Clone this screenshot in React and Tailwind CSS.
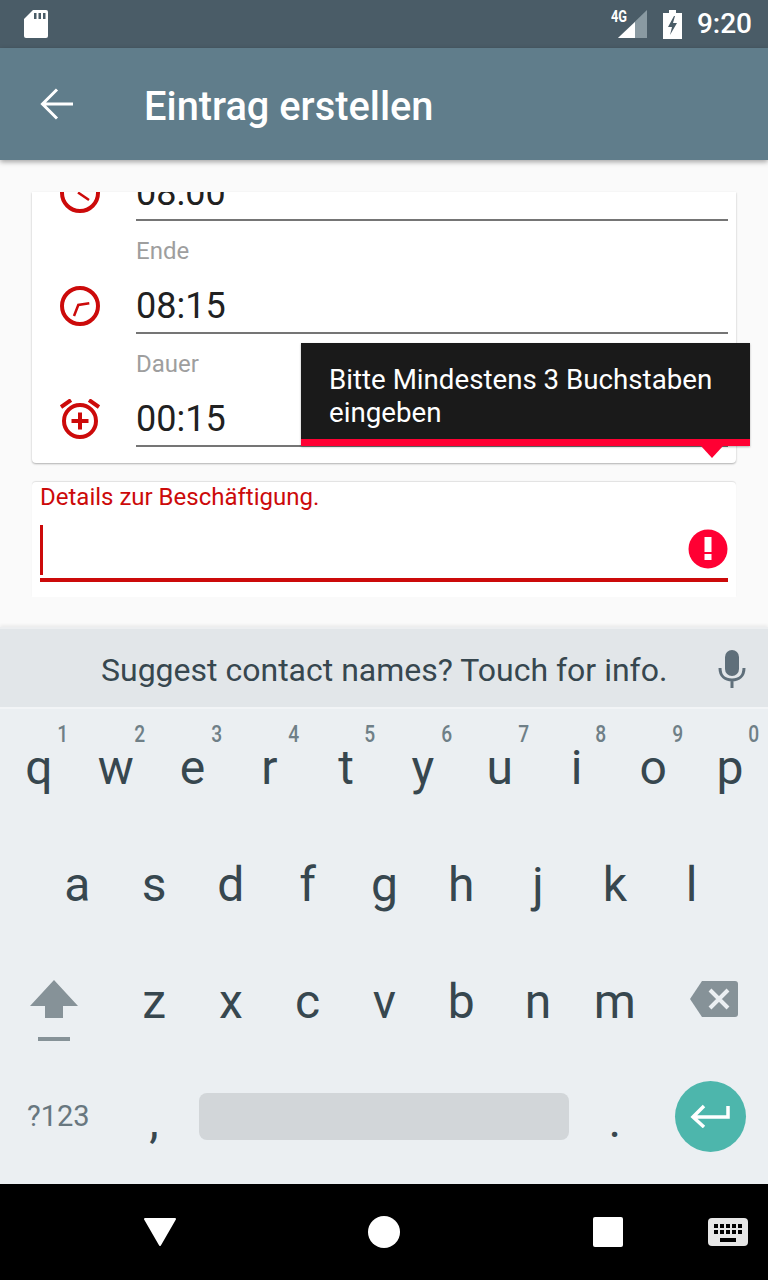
const ROW1 = [['q', '1'], ['w', '2'], ['e', '3'], ['r', '4'], ['t', '5'], ['y', '6'], ['u', '7'], ['i', '8'], ['o', '9'], ['p', '0']]
const ROW2 = ['a', 's', 'd', 'f', 'g', 'h', 'j', 'k', 'l']
const ROW3 = ['z', 'x', 'c', 'v', 'b', 'n', 'm']

function StatusBar() {
  return (
    <div className="h-12 shrink-0 bg-[#4a5c67] flex items-center pl-6 pr-4 text-white">
      <svg width="24" height="28" viewBox="0 0 24 28">
        <path fill="#fff" d="M9 0h13a2 2 0 0 1 2 2v24a2 2 0 0 1-2 2H2a2 2 0 0 1-2-2V9z" />
        <path fill="#4a5c67" d="M10 3h2.500v6H10zM14.500 3H17v6h-2.500zM19 3h2.500v6H19z" />
      </svg>
      <div className="flex-1" />
      <div className="relative w-[36px] h-[28px] mr-[16px]">
        <svg width="29" height="28" viewBox="0 0 29 28" className="absolute left-[7px] top-0">
          <path fill="#8a9aa2" d="M29 0v28H0z" />
          <path fill="#fff" d="M17 12v16H0z" />
        </svg>
        <span className="absolute left-0 top-[-1px] text-[16px] leading-[16px] font-bold scale-x-[0.8] origin-left">4G</span>
      </div>
      <svg width="19" height="29" viewBox="0 0 19 29" className="mr-[15px]">
        <path fill="#fff" d="M6 0h7v3h6v26H0V3h6z" />
        <path fill="#4a5c67" d="M11 6 5 17h4l-2 8 7-12h-4l2-7z" />
      </svg>
      <span className="text-[28px] leading-none font-medium">9:20</span>
    </div>
  )
}

function Toolbar() {
  return (
    <div className="relative z-10 h-[112px] shrink-0 bg-[#607d8b] flex items-center shadow-[0_2px_5px_rgba(0,0,0,0.35)] text-white">
      <div className="w-[144px] pl-[40px]">
        <svg width="33" height="32" viewBox="0 0 33 32" fill="none" stroke="#fff" strokeWidth="3">
          <path d="M33 16H3M17 1.500 2.500 16 17 30.500" />
        </svg>
      </div>
      <h1 className="mt-[6px] text-[39.8px] font-medium leading-none">Eintrag erstellen</h1>
    </div>
  )
}

function ClockIcon({ hand }) {
  return (
    <svg width="40" height="40" viewBox="0 0 40 40" fill="none" stroke="#cc0a0a" strokeWidth="4">
      <circle cx="20" cy="20" r="18" />
      <path d={hand} strokeWidth="2.500" />
    </svg>
  )
}

function AlarmIcon() {
  return (
    <svg width="40" height="40" viewBox="0 0 40 40" fill="none" stroke="#cc0a0a" strokeWidth="4">
      <circle cx="20" cy="22" r="16" />
      <path d="M1 8 11 1M39 8 29 1" />
      <path d="M20 13.500v17M11.500 22h17" />
    </svg>
  )
}

function TimeRow({ label, value, icon }) {
  return (
    <div className="h-[113px] flex pl-[28px] pr-2">
      <div className="w-[76px] shrink-0 flex items-end pb-[8px]">{icon}</div>
      <div className="flex-1 flex flex-col">
        {label && <span className="mt-[14px] text-[24px] leading-[32px] text-[#9e9e9e]">{label}</span>}
        <span className="mt-auto pb-[4px] text-[36px] leading-[44px] text-[#212121] border-b-2 border-[#757575]">{value}</span>
      </div>
    </div>
  )
}

function Form() {
  return (
    <div className="h-[467px] shrink-0 bg-[#fafafa] px-8 pt-8 overflow-hidden">
      <div className="h-[271px] overflow-hidden bg-white rounded-b-[4px] shadow-[0_1px_2px_rgba(0,0,0,0.3)]">
        <div className="-mt-[84px]">
          <TimeRow value="08:00" icon={<ClockIcon hand="M18 19.500 29 27" />} />
          <TimeRow label="Ende" value="08:15" icon={<ClockIcon hand="M14 30l4.300-11 11-1.700" />} />
          <TimeRow label="Dauer" value="00:15" icon={<AlarmIcon />} />
        </div>
      </div>
      <div className="mt-[19px] h-[115px] bg-white rounded-t-[4px] shadow-[0_-1px_1px_rgba(0,0,0,0.1)] px-2 pt-[1px]">
        <p className="text-[24px] leading-[28px] text-[#cc0a0a]">Details zur Beschäftigung.</p>
        <div className="mt-[14px] h-[57px] border-b-4 border-[#cc0a0a] flex items-start justify-between">
          <div className="w-[3px] h-[50px] bg-[#cc0a0a]" />
          <svg width="40" height="40" viewBox="0 0 40 40" className="mt-[4px]">
            <circle cx="20" cy="20" r="19.500" fill="#ff0033" />
            <path fill="#fff" d="M16.500 8h7v15h-7zM16.500 25h7v6h-7z" />
          </svg>
        </div>
      </div>
    </div>
  )
}

function Letter({ ch, hint }) {
  return (
    <div className="relative w-[76.8px] h-full shrink-0 flex items-center justify-center pl-[1px] text-[48px] leading-none text-[#37474f]">
      <span>{ch}</span>
      {hint && <span className="absolute right-[7px] top-[13px] text-[24px] leading-[24px] font-medium text-[#6f7f87] scale-x-[0.8]">{hint}</span>}
    </div>
  )
}

function Keyboard() {
  return (
    <div className="flex-1 flex flex-col bg-[#ebeff2] border-t-2 border-[#eceef0] shadow-[0_-2px_3px_rgba(0,0,0,0.06)]">
      <div className="h-[78px] shrink-0 bg-[#e2e6e9] flex items-center relative">
        <span className="pl-[101px] mt-[4px] text-[32px] leading-none text-[#37474f]">Suggest contact names? Touch for info.</span>
        <svg width="28" height="38" viewBox="0 0 28 38" className="absolute left-[718px] top-[21px]">
          <rect x="7" y="0" width="14" height="26" rx="7" fill="#5f6f7a" />
          <path d="M2 18c0 8 5 12 12 12s12-4 12-12M14 30v8" fill="none" stroke="#5f6f7a" strokeWidth="3" />
        </svg>
      </div>
      <div className="h-[2px] shrink-0 bg-[#f2f4f6]" />
      <div className="h-[117px] flex">
        {ROW1.map(([ch, hint]) => <Letter key={ch} ch={ch} hint={hint} />)}
      </div>
      <div className="h-[117px] flex pl-[38.4px]">
        {ROW2.map(ch => <Letter key={ch} ch={ch} />)}
      </div>
      <div className="h-[118px] flex">
        <div className="w-[115.2px] shrink-0 flex items-center pl-[30px]">
          <svg width="48" height="62" viewBox="0 0 48 62" className="mt-[18px]">
            <path fill="#869298" d="M24 0 48 26H33v12H15V26H0z" />
            <rect x="8" y="57" width="32" height="4" fill="#869298" />
          </svg>
        </div>
        {ROW3.map(ch => <Letter key={ch} ch={ch} />)}
        <div className="flex-1 flex items-center pl-[37px]">
          <svg width="48" height="36" viewBox="0 0 48 36" className="-mt-[6px]">
            <path fill="#869298" d="M12 0h33a3 3 0 0 1 3 3v30a3 3 0 0 1-3 3H12L0 18z" />
            <path stroke="#ebeff2" strokeWidth="4" d="M20 9l18 18M38 9 20 27" />
          </svg>
        </div>
      </div>
      <div className="h-[123px] flex items-start">
        <div className="w-[115.2px] h-[110px] shrink-0 flex items-center pl-[27px] text-[29px] leading-none text-[#68777f]">?123</div>
        <div className="w-[76.8px] h-[110px] shrink-0 flex items-center justify-center pl-[1px] text-[48px] leading-none text-[#37474f]">
          <span className="mt-[10px]">,</span>
        </div>
        <div className="w-[384px] h-[110px] shrink-0 flex items-center px-[7px]">
          <div className="w-full h-[47px] rounded-[8px] bg-[#d2d6d9]" />
        </div>
        <div className="w-[76.8px] h-[110px] shrink-0 flex items-center justify-center pl-[1px] text-[48px] leading-none text-[#37474f]">
          <span className="mt-[10px]">.</span>
        </div>
        <div className="flex-1 h-[110px] flex items-center justify-center">
          <div className="w-[71px] h-[71px] rounded-full bg-[#4db6ac] flex items-center justify-center">
            <svg width="40" height="24" viewBox="0 0 40 24" fill="none" stroke="#fff" strokeWidth="3.5">
              <path d="M38 2v11H4M14 2 3 13l11 10" />
            </svg>
          </div>
        </div>
      </div>
    </div>
  )
}

function NavBar() {
  return (
    <div className="h-24 shrink-0 bg-black flex items-center">
      <svg width="32" height="28" viewBox="0 0 32 28" className="ml-[144px]">
        <path fill="#fff" stroke="#fff" strokeWidth="2" strokeLinejoin="round" d="M1 1h30L16 27z" />
      </svg>
      <div className="ml-[192px] w-8 h-8 rounded-full bg-white" />
      <div className="ml-[193px] w-[30px] h-[30px] rounded-[2px] bg-white" />
      <svg width="40" height="28" viewBox="0 0 40 28" className="ml-[85px]">
        <rect width="40" height="28" rx="4" fill="#e6e6e6" />
        <path fill="#000" d="M6 6h4v4H6zM12 6h4v4h-4zM18 6h4v4h-4zM24 6h4v4h-4zM30 6h4v4h-4zM6 12h4v4H6zM12 12h4v4h-4zM18 12h4v4h-4zM24 12h4v4h-4zM30 12h4v4h-4zM12 20h16v4H12z" />
      </svg>
    </div>
  )
}

export default function App() {
  return (
    <div className="relative w-[768px] h-[1280px] overflow-hidden flex flex-col font-[Roboto,sans-serif] bg-[#fafafa]">
      <StatusBar />
      <Toolbar />
      <Form />
      <Keyboard />
      <NavBar />

      {/* Error tooltip */}
      <div className="absolute left-[301px] top-[343px] w-[449px] h-[103px] z-20 bg-[#1a1a1a] border-b-[7px] border-[#ff0033] pl-[28px] pt-[20px] text-[27.7px] leading-[33px] text-white shadow-[0_1px_2px_rgba(0,0,0,0.3)]">
        Bitte Mindestens 3 Buchstaben eingeben
        <svg width="22" height="12" viewBox="0 0 22 12" className="absolute left-[400px] top-[103px]">
          <path fill="#ff0033" d="M0 0h22L11 12z" />
        </svg>
      </div>
    </div>
  )
}
